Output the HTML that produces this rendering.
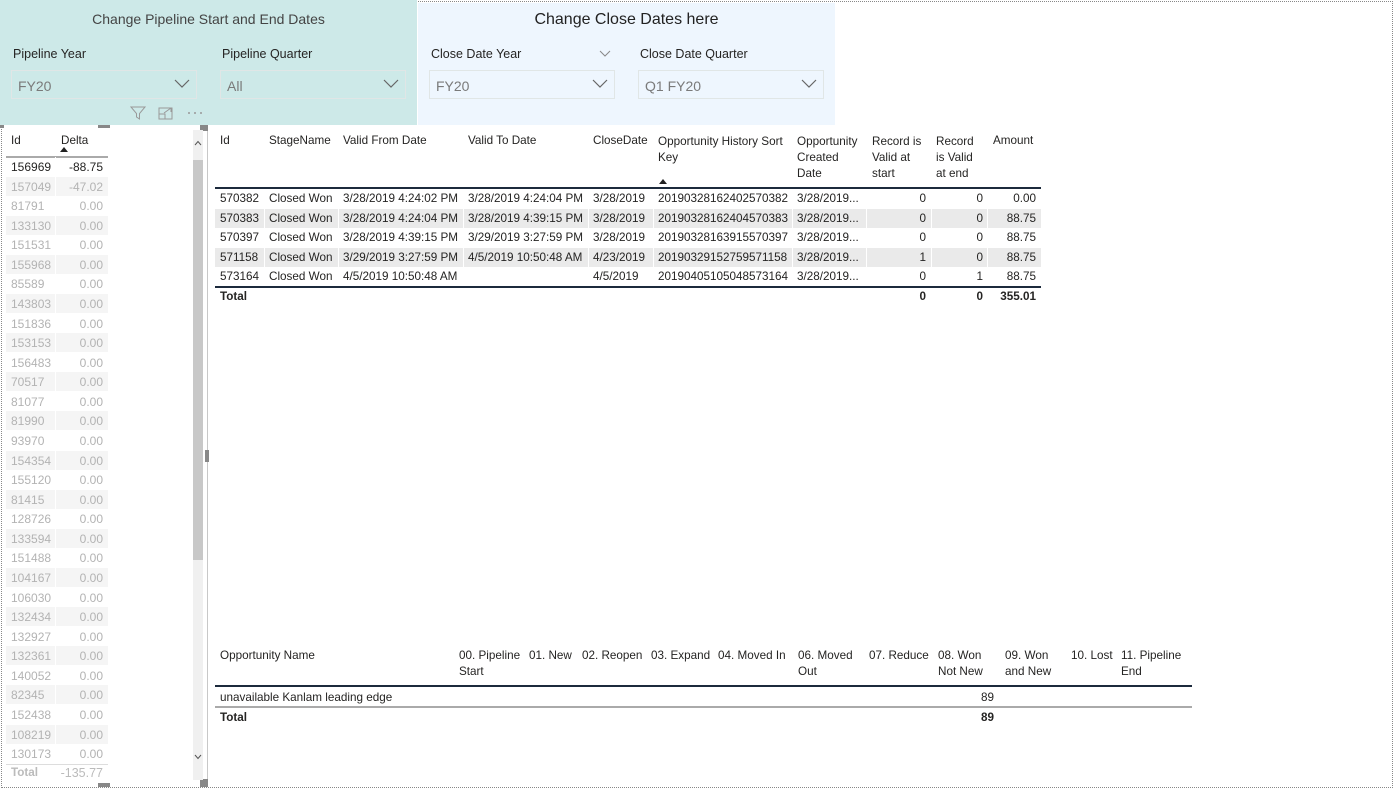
<!DOCTYPE html>
<html><head><meta charset="utf-8"><style>
*{margin:0;padding:0;box-sizing:border-box}
body{width:1397px;height:790px;background:#fff;position:relative;overflow:hidden;font-family:"Liberation Sans",sans-serif;font-size:11.7px;color:#252423}
.a{position:absolute;white-space:nowrap}
.r{text-align:right}
.dd{position:absolute;height:29px;border:1px solid #e0e6e6;font-size:14px;color:#7a7a7a;padding:7px 0 0 6px}
.ch{position:absolute;right:6px;top:8px}
.hl{position:absolute;height:2px;background:#1c2a3c}
.gl{position:absolute;height:1px;background:#c8c8c8}
.vs{position:absolute;width:1px;background:#fff}
</style></head><body>
<div class="a" style="left:1px;top:1px;width:1392px;height:787px;border:1px dotted #888"></div>
<div class="a" style="left:0;top:0;width:417px;height:125px;background:#cde9e8"></div>
<div class="a" style="left:418px;top:3px;width:417px;height:122px;background:#eef6fe"></div>
<div class="a" style="left:0;top:11px;width:417px;text-align:center;font-size:14px;color:#444">Change Pipeline Start and End Dates</div>
<div class="a" style="left:418px;top:11px;width:417px;text-align:center;font-size:16px;color:#222">Change Close Dates here</div>
<div class="a" style="left:13px;top:47px;font-size:12.5px">Pipeline Year</div>
<div class="a" style="left:222px;top:47px;font-size:12.5px">Pipeline Quarter</div>
<div class="a" style="left:431px;top:47px;font-size:12.5px">Close Date Year</div>
<div class="a" style="left:640px;top:47px;font-size:12.5px">Close Date Quarter</div>
<svg class="a" style="left:599px;top:50px" width="12" height="8"><path d="M1 1L6 6L11 1" fill="none" stroke="#888" stroke-width="1"/></svg>
<div class="dd" style="left:11px;top:70px;width:186px">FY20<svg class="ch" width="16" height="10"><path d="M1 1L8 8L15 1" fill="none" stroke="#666" stroke-width="1.2"/></svg></div>
<div class="dd" style="left:220px;top:70px;width:186px">All<svg class="ch" width="16" height="10"><path d="M1 1L8 8L15 1" fill="none" stroke="#666" stroke-width="1.2"/></svg></div>
<div class="dd" style="left:429px;top:70px;width:186px">FY20<svg class="ch" width="16" height="10"><path d="M1 1L8 8L15 1" fill="none" stroke="#666" stroke-width="1.2"/></svg></div>
<div class="dd" style="left:638px;top:70px;width:186px">Q1 FY20<svg class="ch" width="16" height="10"><path d="M1 1L8 8L15 1" fill="none" stroke="#666" stroke-width="1.2"/></svg></div>
<svg class="a" style="left:130px;top:106px" width="75" height="14"><path d="M1 1H15L9.5 7.5V13L6.5 11V7.5Z" fill="none" stroke="#999"/><path d="M29 2H42V13H29ZM29 8H35V13M34 7L41 2M37 2H41V6" fill="none" stroke="#999"/><circle cx="59" cy="7" r="1" fill="#999"/><circle cx="65" cy="7" r="1" fill="#999"/><circle cx="71" cy="7" r="1" fill="#999"/></svg>
<div class="a" style="left:0;top:125px;width:208px;height:661px;border-right:1px solid #c8c8c8"></div>
<div class="a" style="left:0;top:125px;width:4px;height:3px;background:#888"></div>
<div class="a" style="left:98px;top:125px;width:12px;height:3px;background:#888"></div>
<div class="a" style="left:200px;top:125px;width:8px;height:6px;background:#888"></div>
<div class="a" style="left:205px;top:450px;width:4px;height:12px;background:#888"></div>
<div class="a" style="left:98px;top:783px;width:12px;height:4px;background:#888"></div>
<div class="a" style="left:200px;top:779px;width:8px;height:8px;background:#888"></div>
<div class="a" style="left:193px;top:130px;width:10px;height:650px;background:#f0f0f0"></div>
<div class="a" style="left:193px;top:160px;width:10px;height:400px;background:#c8c8c8"></div>
<svg class="a" style="left:194px;top:140px" width="8" height="6"><path d="M1 5L4 1.5L7 5" fill="none" stroke="#555"/></svg>
<svg class="a" style="left:194px;top:754px" width="8" height="6"><path d="M1 1L4 4.5L7 1" fill="none" stroke="#555"/></svg>
<div class="a" style="left:11px;top:134px">Id</div>
<div class="a" style="left:61px;top:134px">Delta</div>
<svg class="a" style="left:60px;top:147px" width="8" height="5"><path d="M0 5L4 0L8 5Z" fill="#222"/></svg>
<div class="gl" style="left:6px;top:156px;width:102px;height:2px;background:#aaa"></div>
<div id="lt"></div>
<div class="a" style="left:6px;top:764px;width:102px;height:1px;background:#ddd"></div>
<div class="a" style="left:11px;top:766px;color:#bbb;font-weight:bold">Total</div>
<div class="a r" style="left:55px;top:766px;width:48px;color:#bbb;font-size:12.5px">-135.77</div>
<div class="a" style="left:220px;top:134px">Id</div>
<div class="a" style="left:269px;top:134px">StageName</div>
<div class="a" style="left:343px;top:134px">Valid From Date</div>
<div class="a" style="left:468px;top:134px">Valid To Date</div>
<div class="a" style="left:593px;top:134px">CloseDate</div>
<div class="a" style="left:658px;top:134px;line-height:16px">Opportunity History Sort<br>Key</div>
<svg class="a" style="left:659px;top:179px" width="8" height="5"><path d="M0 5L4 0L8 5Z" fill="#222"/></svg>
<div class="a" style="left:797px;top:134px;line-height:16px">Opportunity<br>Created<br>Date</div>
<div class="a" style="left:872px;top:134px;line-height:16px">Record is<br>Valid at<br>start</div>
<div class="a" style="left:936px;top:134px;line-height:16px">Record<br>is Valid<br>at end</div>
<div class="a" style="left:993px;top:134px">Amount</div>
<div class="hl" style="left:215px;top:187px;width:826px"></div>
<div id="mt"></div>
<div class="hl" style="left:215px;top:286px;width:826px"></div>
<div class="a" style="left:220px;top:290px;font-weight:bold">Total</div>
<div class="a r" style="left:880px;top:290px;width:46px;font-weight:bold">0</div>
<div class="a r" style="left:940px;top:290px;width:43px;font-weight:bold">0</div>
<div class="a r" style="left:990px;top:290px;width:46px;font-weight:bold">355.01</div>
<div id="bt"></div>
<div class="hl" style="left:215px;top:685px;width:977px"></div>
<div class="a" style="left:220px;top:691px">unavailable Kanlam leading edge</div>
<div class="a r" style="left:940px;top:691px;width:54px">89</div>
<div class="gl" style="left:215px;top:706px;width:977px;height:2px;background:#aaa"></div>
<div class="a" style="left:220px;top:711px;font-weight:bold">Total</div>
<div class="a r" style="left:940px;top:711px;width:54px;font-weight:bold">89</div>
<script>
var ids=[156969,157049,81791,133130,151531,155968,85589,143803,151836,153153,156483,70517,81077,81990,93970,154354,155120,81415,128726,133594,151488,104167,106030,132434,132927,132361,140052,82345,152438,108219,130173];
var h='';ids.forEach(function(v,i){var y=157+i*19.57;var c=i==0?'#252423':'#b3b3b3';var d=i==0?'-88.75':i==1?'-47.02':'0.00';
if(i%2==1)h+='<div class="a" style="left:6px;top:'+y+'px;width:102px;height:19px;background:#f5f5f5"></div>';
h+='<div class="a" style="left:55px;top:'+y+'px;width:1px;height:19px;background:#fff"></div>';
h+='<div class="a" style="left:11px;top:'+(y+3)+'px;color:'+c+';font-size:12px">'+v+'</div><div class="a r" style="left:55px;top:'+(y+3)+'px;width:48px;color:'+c+';font-size:12px">'+d+'</div>';});
document.getElementById('lt').innerHTML=h;
var rows=[["570382","3/28/2019 4:24:02 PM","3/28/2019 4:24:04 PM","3/28/2019","20190328162402570382","0","0","0.00"],
["570383","3/28/2019 4:24:04 PM","3/28/2019 4:39:15 PM","3/28/2019","20190328162404570383","0","0","88.75"],
["570397","3/28/2019 4:39:15 PM","3/29/2019 3:27:59 PM","3/28/2019","20190328163915570397","0","0","88.75"],
["571158","3/29/2019 3:27:59 PM","4/5/2019 10:50:48 AM","4/23/2019","20190329152759571158","1","0","88.75"],
["573164","4/5/2019 10:50:48 AM","","4/5/2019","20190405105048573164","0","1","88.75"]];
var seps=[264,338,463,588,653,792,866,931,987];
h='';rows.forEach(function(r,i){var y=189+i*19.6;
if(i%2==1)h+='<div class="a" style="left:215px;top:'+y+'px;width:826px;height:19px;background:#eaeaea"></div>';
seps.forEach(function(s){h+='<div class="vs" style="left:'+s+'px;top:'+y+'px;height:20px"></div>';});
var t=y+3;
h+='<div class="a" style="left:220px;top:'+t+'px">'+r[0]+'</div><div class="a" style="left:269px;top:'+t+'px">Closed Won</div><div class="a" style="left:343px;top:'+t+'px">'+r[1]+'</div><div class="a" style="left:468px;top:'+t+'px">'+r[2]+'</div><div class="a" style="left:593px;top:'+t+'px">'+r[3]+'</div><div class="a" style="left:658px;top:'+t+'px">'+r[4]+'</div><div class="a" style="left:797px;top:'+t+'px">3/28/2019...</div><div class="a r" style="left:880px;top:'+t+'px;width:46px">'+r[5]+'</div><div class="a r" style="left:940px;top:'+t+'px;width:43px">'+r[6]+'</div><div class="a r" style="left:990px;top:'+t+'px;width:46px">'+r[7]+'</div>';});
document.getElementById('mt').innerHTML=h;
var bh=[[220,"Opportunity Name"],[459,"00. Pipeline<br>Start"],[529,"01. New"],[582,"02. Reopen"],[651,"03. Expand"],[718,"04. Moved In"],[798,"06. Moved<br>Out"],[869,"07. Reduce"],[938,"08. Won<br>Not New"],[1005,"09. Won<br>and New"],[1071,"10. Lost"],[1121,"11. Pipeline<br>End"]];
h='';bh.forEach(function(b){h+='<div class="a" style="left:'+b[0]+'px;top:648px;line-height:16px">'+b[1]+'</div>';
if(b[0]>220){h+='<div class="vs" style="left:'+(b[0]-6)+'px;top:684px;height:3px"></div><div class="vs" style="left:'+(b[0]-6)+'px;top:705px;height:3px"></div>';}});
document.getElementById('bt').innerHTML=h;
</script>
</body></html>
